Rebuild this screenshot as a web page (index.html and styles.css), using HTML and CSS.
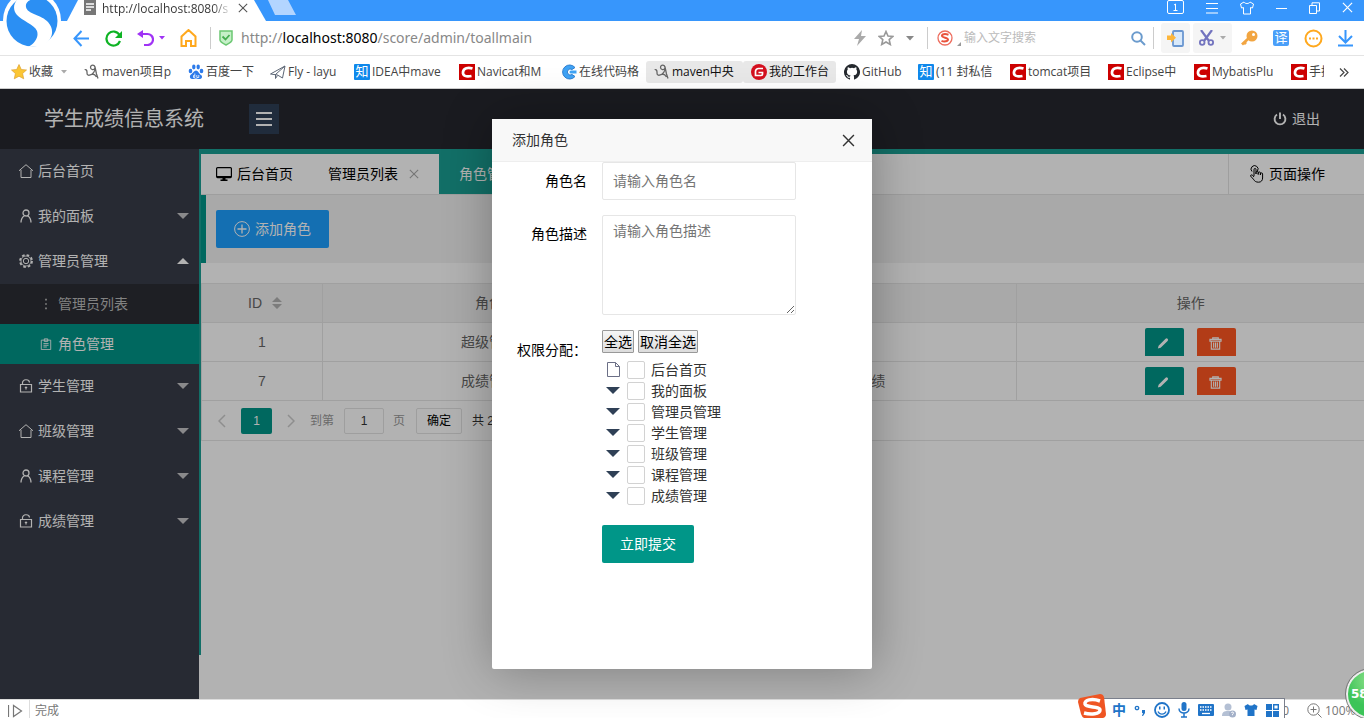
FILE: index.html
```html
<!DOCTYPE html>
<html lang="zh-CN">
<head>
<meta charset="utf-8">
<title>学生成绩信息系统</title>
<link rel="stylesheet" href="styles.css">
</head>
<body>
<svg class="defs" aria-hidden="true">
  <symbol id="i-house" viewBox="0 0 14 14"><path d="M0 6.800L7 .7l7 6.100M2 6v7.500h10V6" fill="none" stroke="currentColor"/></symbol>
  <symbol id="i-user" viewBox="0 0 14 14"><circle cx="7" cy="4" r="3" fill="none" stroke="currentColor" stroke-width="1.300"/><path d="M2 13.500C2 10 3.500 8 5.500 6.800M12 13.500C12 10 10.500 8 8.500 6.800" fill="none" stroke="currentColor" stroke-width="1.300"/></symbol>
  <symbol id="i-gear" viewBox="0 0 14 14"><circle cx="7" cy="7" r="6" fill="none" stroke="currentColor" stroke-width="1.800" stroke-dasharray="2.600 2.100"/><circle cx="7" cy="7" r="5" fill="none" stroke="currentColor" stroke-width=".8"/><circle cx="7" cy="7" r="2.700" fill="none" stroke="currentColor"/></symbol>
  <symbol id="i-lock" viewBox="0 0 14 14"><path d="M1.500 5.500h11v7.500h-11zM3.500 5.500V4a3.500 3 0 0 1 7-.5M7 7.500v3M5.800 8.500h2.400" fill="none" stroke="currentColor" stroke-width="1.200"/></symbol>
  <symbol id="i-note" viewBox="0 0 14 14"><path d="M1.500 2.500h11v11h-11zM5 1h4v3H5zM4 6.500h6M4 8.500h6M4 10.500h4" fill="none" stroke="currentColor"/></symbol>
  <symbol id="i-dots" viewBox="0 0 14 14"><path d="M6 1h2v2H6zM6 6h2v2H6zM6 11h2v2H6z" fill="currentColor"/></symbol>
  <symbol id="i-close" viewBox="0 0 12 12"><path d="M1 1l10 10M11 1L1 11" fill="none" stroke="currentColor" stroke-width="1.300"/></symbol>
  <symbol id="i-pen" viewBox="0 0 14 14"><path d="M2 12.500l.8-3 7.500-7.500a1.500 1.500 0 0 1 2.200 2.200L5 11.700z" fill="currentColor"/></symbol>
  <symbol id="i-trash" viewBox="0 0 14 14"><path d="M1 2.500h12v2H1zM4 2.500V1h6v1.500M2.500 5v8h9V5M5 6v5.500M7 6v5.500M9 6v5.500" fill="none" stroke="currentColor" stroke-width="1.200"/></symbol>
  <symbol id="i-csdn" viewBox="0 0 16 16"><path d="M0 0h16v16H0z" fill="#c00"/><path d="M13.500 4.500C9 3 4.500 4 4 8s3 5 8.500 4" fill="none" stroke="#fff" stroke-width="2.700"/></symbol>
  <symbol id="i-maven" viewBox="0 0 16 16"><path d="M.8 6C1.500 5 3 6 3 8s0 3.500 2.500 3.200C9 10.500 11.500 7 11 3.500 10.700.5 6.500.5 6.500 3.200S10 6.500 11 4M11 3l1.500 7 1.500 4.500M8 10.500c2-1 3 0 4.500 2.500" fill="none" stroke="#666" stroke-width="1.300"/></symbol>
  <symbol id="i-shirt" viewBox="0 0 14 14"><path d="M4 1L.5 3l1 4 2-.5V13h7V6.500l2 .5 1-4L10 1C9 3 5 3 4 1z"/></symbol>
</svg>

<header class="titlebar">
  <svg class="tabshape" width="200" height="21" viewBox="0 0 200 21" aria-hidden="true"><path d="M0 21L11 0h176l12 21z" fill="#fff"/></svg>
  <div class="tab">
    <svg width="12" height="15" viewBox="0 0 12 15"><path d="M0 0h12v15H0z" fill="#777"/><path d="M2 4h8M2 7h8M2 10h5" stroke="#fff" stroke-width="1.500"/></svg>
    <span class="tab-title">http://localhost:8080/s</span>
    <button class="plain" aria-label="关闭标签"><svg width="10" height="10" viewBox="0 0 12 12"><use href="#i-close"/></svg></button>
  </div>
  <svg class="ghost" width="28" height="15" viewBox="0 0 28 15" aria-hidden="true"><path d="M0 0h20l8 15H7z" fill="#b3d5ff"/></svg>
  <div class="win">
    <svg width="17" height="15" viewBox="0 0 17 15"><rect x=".5" y=".5" width="16" height="13" rx="1.500"/><path d="M7 5l1.500-1v7M6.500 10.500h4"/></svg>
    <svg width="12" height="12" viewBox="0 0 12 12"><path d="M0 1.500h12M0 6.500h12M0 11h12"/></svg>
    <svg width="14" height="14" viewBox="0 0 14 14"><use href="#i-shirt"/></svg>
    <svg width="11" height="12" viewBox="0 0 11 12"><path d="M0 6.500h11"/></svg>
    <svg width="11" height="12" viewBox="0 0 11 12"><path d="M.5 3.500h7v8h-7zM3 3V.800h7.500V9H8"/></svg>
    <svg width="11" height="11" viewBox="0 0 12 12"><use href="#i-close"/></svg>
  </div>
</header>
<svg class="logo" width="62" height="50" viewBox="0 0 62 50" aria-hidden="true">
  <circle cx="32" cy="20" r="29" fill="#fff"/>
  <circle cx="32" cy="21" r="25.500" fill="#2b8ff3"/>
  <path d="M27-6C14-2 11 8 17 15c5 6 17 9 20 16 2 6-2 12-9 16l14-1c11-6 13-16 6-24-6-7-21-8-22-15-1-5 4-8 12-9z" fill="#fff"/>
</svg>

<nav class="toolbar">
  <div class="nav">
    <svg width="17" height="17" viewBox="0 0 17 17"><path d="M16 8.500H1.500M8.500 1L1.500 8.500l7 7.500" fill="none" stroke="#3796fc" stroke-width="2"/></svg>
    <svg width="17" height="17" viewBox="0 0 17 17"><path d="M14.500 5A7 7 0 1 0 15 11" fill="none" stroke="#0eb324" stroke-width="2.200"/><path d="M17 1v7h-7z" fill="#0eb324"/></svg>
    <span class="undo"><svg width="17" height="16" viewBox="0 0 17 16"><path d="M3 4h7.500a5 5 0 0 1 0 11H7" fill="none" stroke="#a033f5" stroke-width="2.200"/><path d="M0 4l6-4v8z" fill="#a033f5"/></svg><svg width="6" height="4" viewBox="0 0 6 4"><path d="M0 0h6L3 3.500z" fill="#a033f5"/></svg></span>
    <svg width="17" height="18" viewBox="0 0 17 18"><path d="M1.500 7.500L8.500 1l7 6.500v9.500H11v-5H6v5H1.500z" fill="none" stroke="#ffa81d" stroke-width="2"/></svg>
  </div>
  <i class="vline"></i>
  <svg width="14" height="16" viewBox="0 0 14 16"><path d="M1 1h12v9c0 2-4 4-6 5-2-1-6-3-6-5z" fill="#c5f0c8" stroke="#6cc773" stroke-width="1.500"/><path d="M3.500 6.500l3 3 4-4.500" fill="none" stroke="#45ae50" stroke-width="1.800"/></svg>
  <div class="url">http://<b>localhost:8080</b>/score/admin/toallmain</div>
  <div class="urltools">
    <svg width="12" height="16" viewBox="0 0 12 16"><path d="M8 0L0 9h5l-2 7 9-10H7z" fill="#aaa"/></svg>
    <svg width="16" height="16" viewBox="0 0 16 16"><path d="M8 1.500l2 4.500 4.800.4-3.600 3.200 1.100 4.900L8 12l-4.300 2.500 1.100-4.900L1.200 6.400 6 6z" fill="none" stroke="#999" stroke-width="1.600"/></svg>
    <svg width="8" height="5" viewBox="0 0 8 5"><path d="M0 0h8L4 4.500z" fill="#888"/></svg>
  </div>
  <i class="vline"></i>
  <div class="search">
    <svg width="16" height="16" viewBox="0 0 16 16"><circle cx="8" cy="8" r="7" fill="none" stroke="#ee6d5e" stroke-width="1.300"/><path d="M11.500 4.800C8 3.500 4.800 4 5 6s6 1.500 6 3.500S7 12 4.500 10.800" fill="none" stroke="#e9533d" stroke-width="2"/></svg>
    <svg class="corner" width="4" height="4" viewBox="0 0 4 4"><path d="M4 0v4H0z" fill="#999"/></svg>
    <input type="text" aria-label="搜索" placeholder="输入文字搜索">
    <svg width="15" height="15" viewBox="0 0 15 15"><circle cx="6" cy="6" r="4.800" fill="none" stroke="#6b9bcd" stroke-width="2"/><path d="M9.500 9.500l4.500 4.500" stroke="#6b9bcd" stroke-width="2"/></svg>
  </div>
  <i class="vline"></i>
  <div class="ext">
    <span class="pill"><svg width="17" height="17" viewBox="0 0 17 17"><rect x="6" y="1" width="10" height="15" rx="1" fill="#d9e9fa" stroke="#6a97d1" stroke-width="1.800"/><path d="M0 5.500h4V3l5 4.800-5 4.700V10H0z" fill="#fdb63b"/></svg></span>
    <span class="pill"><svg width="15" height="16" viewBox="0 0 15 16"><path d="M2 0l8 11M13 0L5 11" stroke="#7374bf" stroke-width="2.200"/><circle cx="3.200" cy="12.500" r="2.300" fill="none" stroke="#7374bf" stroke-width="1.800"/><circle cx="11.800" cy="12.500" r="2.300" fill="none" stroke="#7374bf" stroke-width="1.800"/></svg><svg width="6" height="4" viewBox="0 0 6 4"><path d="M0 0h6L3 3.500z" fill="#aaa"/></svg></span>
    <span class="row">
      <svg width="17" height="16" viewBox="0 0 17 16"><circle cx="11" cy="6" r="5.500" fill="#f2a541"/><path d="M8 8l-7 6.500M3 12l2 2" stroke="#f2a541" stroke-width="2.800"/><circle cx="12.500" cy="4.500" r="1.500" fill="#fff"/></svg>
      <span class="yi">译</span>
      <svg width="19" height="19" viewBox="0 0 19 19"><circle cx="9.500" cy="9.500" r="8" fill="none" stroke="#ffa81d" stroke-width="2"/><path d="M5 8.500h2v2H5zM8.500 8.500h2v2h-2zM12 8.500h2v2h-2z" fill="#ffa81d"/></svg>
      <svg width="15" height="17" viewBox="0 0 15 17"><path d="M7.500 0v12M1 6l6.500 6.500L14 6M0 15.500h15" fill="none" stroke="#3796fc" stroke-width="2"/></svg>
    </span>
  </div>
</nav>

<nav class="bookmarks">
  <a href="#"><svg width="16" height="16" viewBox="0 0 16 16"><path d="M8 .500l2.300 5 5.200.5-3.900 3.500 1.100 5.300L8 12.200l-4.700 2.600 1.100-5.300L.500 6l5.200-.5z" fill="#fbc634" stroke="#dda032" stroke-width=".7"/></svg><span>收藏</span><svg class="drop" width="6" height="4" viewBox="0 0 6 4"><path d="M0 0h6L3 3.500z" fill="#aaa"/></svg></a>
  <a href="#"><svg width="16" height="16"><use href="#i-maven"/></svg><span>maven项目p</span></a>
  <a href="#"><svg width="16" height="16" viewBox="0 0 16 16"><g fill="#2d7bea"><ellipse cx="2.500" cy="7" rx="1.800" ry="2.200"/><ellipse cx="5.800" cy="3" rx="1.700" ry="2.400"/><ellipse cx="10.200" cy="3" rx="1.700" ry="2.400"/><ellipse cx="13.500" cy="7" rx="1.800" ry="2.200"/><path d="M8 6.500c2 0 3 3 5 4.500s1 4-1.500 4S9 14.500 8 14.500s-2 .5-4 .5-3-3-1-4.500S6 6.500 8 6.500z"/></g><path d="M6.800 9.500v4H5.500v-2h1M8.800 11v2.500h2V11" fill="none" stroke="#fff" stroke-width=".8"/></svg><span>百度一下</span></a>
  <a href="#"><svg width="16" height="16" viewBox="0 0 16 16"><path d="M.5 10L15 2l-2.500 12-5-3zM15 2L5.500 10.500v4l2-3" fill="none" stroke="#5c6675"/></svg><span>Fly - layu</span></a>
  <a href="#"><i class="zhi">知</i><span>IDEA中mave</span></a>
  <a href="#"><svg width="16" height="16"><use href="#i-csdn"/></svg><span>Navicat和M</span></a>
  <a href="#"><svg width="16" height="16" viewBox="0 0 16 16"><path d="M14 3.500A7 7 0 1 0 14 12.500L11 10.500A3 3 0 1 1 11 5.500z" fill="#3fa3f5" stroke="#2f7fd0"/><path d="M15.500 6.500H10a1.500 1.500 0 0 0 0 3h5.500z" fill="#3fa3f5"/></svg><span>在线代码格</span></a>
  <a href="#" class="on"><svg width="16" height="16"><use href="#i-maven"/></svg><span>maven中央</span></a>
  <a href="#" class="on"><svg width="16" height="16" viewBox="0 0 16 16"><circle cx="8" cy="8" r="8" fill="#d4101f"/><path d="M12 4.500H7.500a3 3 0 0 0-3 3v4H10a1.500 1.500 0 0 0 1.500-1.500V8.500H7.500" fill="none" stroke="#fff" stroke-width="1.700"/></svg><span>我的工作台</span></a>
  <a href="#"><svg width="16" height="16" viewBox="0 0 16 16"><path fill="#24292e" d="M8 0a8 8 0 0 0-2.530 15.590c.4.070.55-.17.550-.38v-1.490c-2.010.37-2.530-.49-2.690-.94-.09-.23-.48-.94-.82-1.130-.28-.15-.68-.52-.01-.53.630-.01 1.080.580 1.230.820.720 1.210 1.870.870 2.330.660.070-.52.280-.87.510-1.070-1.780-.2-3.640-.89-3.640-3.950 0-.87.310-1.590.820-2.150-.08-.2-.36-1.020.080-2.120 0 0 .670-.21 2.200.820a7.400 7.400 0 0 1 4 0c1.530-1.040 2.200-.82 2.200-.82.440 1.100.160 1.920.080 2.120.510.560.820 1.270.820 2.150 0 3.070-1.870 3.750-3.650 3.950.290.250.540.730.540 1.480v2.190c0 .210.150.460.550.380A8 8 0 0 0 8 0z"/></svg><span>GitHub</span></a>
  <a href="#"><i class="zhi">知</i><span>(11 封私信</span></a>
  <a href="#"><svg width="16" height="16"><use href="#i-csdn"/></svg><span>tomcat项目</span></a>
  <a href="#"><svg width="16" height="16"><use href="#i-csdn"/></svg><span>Eclipse中</span></a>
  <a href="#"><svg width="16" height="16"><use href="#i-csdn"/></svg><span>MybatisPlu</span></a>
  <a href="#"><svg width="16" height="16"><use href="#i-csdn"/></svg><span>手把</span></a>
  <button class="plain more" aria-label="更多书签"><svg width="10" height="9" viewBox="0 0 10 9"><path d="M1 .500l4 4-4 4M5 .500l4 4-4 4" fill="none" stroke="#444" stroke-width="1.200"/></svg></button>
</nav>

<div class="app">
  <header class="head">
    <h1>学生成绩信息系统</h1>
    <button class="fold" aria-label="折叠菜单"><svg width="18" height="16" viewBox="0 0 18 16"><path d="M1 2h16M1 8h16M1 14h16" stroke="#fff" stroke-width="2"/></svg></button>
    <a href="#" class="logout"><svg width="14" height="14" viewBox="0 0 14 14"><path d="M4 2.500a5.400 5.400 0 1 0 6 0M7 .500V7" fill="none" stroke="currentColor" stroke-width="1.900"/></svg>退出</a>
  </header>
  <div class="cols">
    <nav class="side">
      <a href="#"><svg width="14" height="14"><use href="#i-house"/></svg>后台首页</a>
      <a href="#"><svg width="14" height="14"><use href="#i-user"/></svg>我的面板<i class="caret"></i></a>
      <a href="#"><svg width="14" height="14"><use href="#i-gear"/></svg>管理员管理<i class="caret up"></i></a>
      <a href="#" class="sub"><svg width="12" height="12"><use href="#i-dots"/></svg>管理员列表</a>
      <a href="#" class="sub active"><svg width="12" height="12"><use href="#i-note"/></svg>角色管理</a>
      <a href="#"><svg width="14" height="14"><use href="#i-lock"/></svg>学生管理<i class="caret"></i></a>
      <a href="#"><svg width="14" height="14"><use href="#i-house"/></svg>班级管理<i class="caret"></i></a>
      <a href="#"><svg width="14" height="14"><use href="#i-user"/></svg>课程管理<i class="caret"></i></a>
      <a href="#"><svg width="14" height="14"><use href="#i-lock"/></svg>成绩管理<i class="caret"></i></a>
    </nav>
    <main class="main">
      <div class="tabs">
        <a href="#"><svg width="16" height="16" viewBox="0 0 16 16"><rect x=".6" y="1.600" width="14.800" height="10" rx="1" fill="none" stroke="currentColor" stroke-width="1.200"/><path d="M1 10h14v2H1zM6.500 12h3v1.500h2V15h-7v-1.500h2z" fill="currentColor"/></svg>后台首页</a>
        <a href="#">管理员列表<svg class="x" width="10" height="10"><use href="#i-close"/></svg></a>
        <a href="#" class="cur">角色管理<svg class="x" width="10" height="10"><use href="#i-close"/></svg></a>
        <a href="#" class="ops"><svg width="15" height="18" viewBox="0 0 15 18"><path d="M3 6.500A3.500 3.500 0 1 1 8.500 6M5 11V4.500a1 1 0 0 1 2 0V9V7.500a1 1 0 0 1 2.200 0V9.500V8a1 1 0 0 1 2.200 0V10V9a1 1 0 0 1 2.200 0v4c0 2.500-1.500 4.200-4 4.200-2.700 0-4-1-5.200-3L1.500 11c0-1.200 1.500-1.500 2.300-.5L5 12" fill="none" stroke="currentColor"/></svg>页面操作</a>
      </div>
      <div class="quote">
        <button class="add"><svg width="16" height="16" viewBox="0 0 16 16"><circle cx="8" cy="8" r="7.400" fill="none" stroke="currentColor"/><path d="M8 3.500v9M3.500 8h9" stroke="currentColor" stroke-width="1.300"/></svg>添加角色</button>
      </div>
      <table class="grid">
        <colgroup><col class="c-id"><col><col><col></colgroup>
        <thead><tr><th><span class="sorted">ID<svg width="10" height="12" viewBox="0 0 10 12"><path d="M5 0l5 5H0zM0 7h10l-5 5z" fill="#b2b2b2"/></svg></span></th><th>角色名</th><th>角色描述</th><th>操作</th></tr></thead>
        <tbody>
          <tr><td>1</td><td>超级管理员</td><td></td><td><div class="acts"><button aria-label="编辑"><svg width="13" height="13"><use href="#i-pen"/></svg></button><button class="del" aria-label="删除"><svg width="13" height="13"><use href="#i-trash"/></svg></button></div></td></tr>
          <tr><td>7</td><td>成绩管理员</td><td>管理学生成绩</td><td><div class="acts"><button aria-label="编辑"><svg width="13" height="13"><use href="#i-pen"/></svg></button><button class="del" aria-label="删除"><svg width="13" height="13"><use href="#i-trash"/></svg></button></div></td></tr>
        </tbody>
      </table>
      <div class="pager">
        <svg width="8" height="14" viewBox="0 0 8 14"><path d="M7 1L1 7l6 6" fill="none" stroke="#ccc" stroke-width="1.500"/></svg>
        <b>1</b>
        <svg width="8" height="14" viewBox="0 0 8 14"><path d="M1 1l6 6-6 6" fill="none" stroke="#ccc" stroke-width="1.500"/></svg>
        <label for="page">到第</label><input id="page" type="text" value="1"><span>页</span><button>确定</button><em>共 2 条</em>
      </div>
    </main>
  </div>

  <div class="shade">
    <section class="dialog" role="dialog" aria-labelledby="dlg">
      <header><h2 id="dlg">添加角色</h2><button class="plain" aria-label="关闭"><svg width="13" height="13" viewBox="0 0 12 12"><use href="#i-close"/></svg></button></header>
      <form>
        <label class="lab" for="rname">角色名</label>
        <input class="field" id="rname" type="text" placeholder="请输入角色名">
        <label class="lab" for="rdesc">角色描述</label>
        <textarea class="field" id="rdesc" placeholder="请输入角色描述"></textarea>
        <span class="lab">权限分配<span class="colon">：</span></span>
        <div>
          <div class="pick"><button type="button">全选</button><button type="button">取消全选</button></div>
          <ul class="tree">
            <li><svg width="13" height="15" viewBox="0 0 13 15"><path d="M.5.5h8l4 4v10H.5zM8.500.5v4h4" fill="none" stroke="#6b6f86"/></svg><label><input type="checkbox">后台首页</label></li>
            <li><i></i><label><input type="checkbox">我的面板</label></li>
            <li><i></i><label><input type="checkbox">管理员管理</label></li>
            <li><i></i><label><input type="checkbox">学生管理</label></li>
            <li><i></i><label><input type="checkbox">班级管理</label></li>
            <li><i></i><label><input type="checkbox">课程管理</label></li>
            <li><i></i><label><input type="checkbox">成绩管理</label></li>
          </ul>
          <button type="button" class="submit">立即提交</button>
        </div>
      </form>
    </section>
  </div>
</div>

<footer class="status">
  <svg width="15" height="14" viewBox="0 0 15 14"><path d="M.5 1v12M5.500 1.500v11l8-5.500z" fill="none" stroke="#777" stroke-width="1.200"/></svg>
  <i class="vline"></i>
  <span>完成</span>
  <span class="zoom">0</span>
  <svg width="15" height="15" viewBox="0 0 15 15"><path d="M6.500 3.500v6M3.500 6.500h6M10.500 10.500l4 4" stroke="#777"/><circle cx="6.500" cy="6.500" r="5.700" fill="none" stroke="#777"/></svg>
  <span class="pct">100%</span>
</footer>
<div class="ime">
  <b>中</b>
  <svg width="12" height="14" viewBox="0 0 12 14"><circle cx="3" cy="5" r="1.700" fill="none" stroke="#2074c8" stroke-width="1.300"/><path d="M8 7h3v3l-2 3H8l1-3H8z"/></svg>
  <svg width="16" height="16" viewBox="0 0 16 16"><circle cx="8" cy="8" r="7" fill="none" stroke="#2074c8" stroke-width="1.800"/><path d="M5 4.500h1.500v3H5zM9.500 4.500H11v3H9.500z"/><path d="M4 9.500c1.500 3.500 6.500 3.500 8 0" fill="none" stroke="#2074c8" stroke-width="1.300"/></svg>
  <svg width="12" height="16" viewBox="0 0 12 16"><rect x="3.500" width="5" height="9" rx="2.500"/><path d="M1 6.500c0 6 10 6 10 0M6 11v4M3 15h6" fill="none" stroke="#2074c8" stroke-width="1.500"/></svg>
  <svg width="16" height="12" viewBox="0 0 16 12"><rect width="16" height="12" rx="1"/><path d="M2 3h12M2 6h12" stroke="#fff" stroke-width="1.500" stroke-dasharray="1.500 1"/><path d="M4 9.500h8" stroke="#fff" stroke-width="1.300"/></svg>
  <svg width="14" height="15" viewBox="0 0 14 15"><circle cx="6" cy="4" r="3.500" fill="#b4c0d4"/><path d="M0 13c0-4 2-5 6-5s6 1 6 5z" fill="#b4c0d4"/><circle cx="10.500" cy="11" r="3.500" fill="#a3b0c8"/><path d="M9.500 10c0-1.500 2.500-1 2 .3l-1 .9v1" fill="none" stroke="#fff"/></svg>
  <svg width="14" height="14" viewBox="0 0 14 14"><use href="#i-shirt"/></svg>
  <svg width="13" height="13" viewBox="0 0 13 13"><path d="M0 0h6v6H0zM0 7h6v6H0zM7 7h6v6H7z"/><path d="M7.700.7h4.600v4.600H7.700z" fill="none" stroke="#2074c8" stroke-width="1.400"/></svg>
</div>
<svg class="sogou" width="28" height="24" viewBox="0 0 28 24" aria-hidden="true"><path d="M2 4L22 0q3 0 4 3l2 17q0 3-3 4H6q-2-1-3-4L0 8q0-3 2-4z" fill="#ef5523"/><path d="M22 7C14 4 6 6 7 10s15 2 15 6-9 5-16 3" fill="none" stroke="#fff" stroke-width="3.500"/></svg>
<div class="ball">58</div>
</body>
</html>
```

FILE: styles.css
```css
* { box-sizing: border-box; }
html, body { height: 100%; }
body {
  margin: 0;
  position: relative;
  display: flex;
  flex-direction: column;
  overflow: hidden;
  font: 14px/20px "Liberation Sans", "Noto Sans CJK SC", sans-serif;
  color: #333;
  background: #fff;
}
button, input, textarea { font: inherit; color: inherit; }
a { color: inherit; text-decoration: none; }
svg { flex: none; display: block; }
i, em { font-style: normal; }
h1, h2, ul { margin: 0; padding: 0; font-weight: 400; list-style: none; }
.defs { position: absolute; width: 0; height: 0; }
.plain { border: 0; padding: 0; background: none; }

/* browser chrome */
.titlebar {
  flex: none;
  height: 21px;
  display: flex;
  background: #3796fc;
  position: relative;
  overflow: hidden;
  padding-left: 84px;
}
.tabshape { position: absolute; left: 67px; top: 0; }
.tab { position: relative; display: flex; align-items: flex-start; width: 184px; }
.tab-title {
  flex: none;
  width: 130px;
  margin: 0 6px;
  white-space: nowrap;
  font: 12px/18px "Open Sans", sans-serif;
  color: transparent;
  background: linear-gradient(90deg, #333 85%, #fff);
  background-clip: text;
  -webkit-background-clip: text;
}
.tab .plain { margin-top: 3px; color: #555; }
.win { margin-left: auto; padding-right: 11px; display: flex; gap: 22px; height: 15px; align-items: center; color: #fff; }
.win svg { fill: none; stroke: #fff; }
.logo { position: absolute; left: 0; top: 0; z-index: 2; }
.toolbar {
  flex: none;
  height: 35px;
  display: flex;
  align-items: center;
  padding: 0 11px 0 73px;
  border-bottom: 1px solid #e4e4e4;
}
.vline { flex: none; width: 1px; height: 22px; background: #ccc; }
.nav { display: flex; align-items: center; gap: 15px; margin-right: 13px; }
.undo { display: flex; align-items: center; gap: 5px; }
.toolbar > svg { margin: 0 8px; }
.url { flex: 1; font: 14px/20px "Noto Sans", sans-serif; color: #888; }
.url b { font-weight: 400; color: #000; }
.urltools { display: flex; align-items: center; gap: 12px; margin-right: 13px; }
.search { display: flex; align-items: center; width: 225px; padding: 0 7px 0 9px; }
.search .corner { margin: 12px 3px 0 4px; }
.search input { flex: 1; min-width: 0; border: 0; padding: 0; font-size: 12px; }
.search input::placeholder { color: #bbb; }
.ext { display: flex; align-items: center; gap: 3px; padding-left: 7px; }
.pill { display: flex; align-items: center; gap: 6px; height: 30px; padding: 0 6px; border-radius: 3px; background: #f5f5f5; }
.row { display: flex; align-items: center; gap: 15px; padding-left: 6px; }
.yi { width: 16px; height: 16px; border-radius: 2px; background: #4a9ff9; color: #fff; font-size: 13px; line-height: 15px; text-align: center; }
.bookmarks {
  flex: none;
  height: 33px;
  display: grid;
  grid-template-columns: 73px 104px 82px 84px 105px 102px 93px 97px 93px 74px 92px 98px 86px 97px 41px 1fr;
  align-items: center;
  border-bottom: 1px solid #ccc;
  padding-left: 3px;
  font: 12px/22px "Open Sans", "Noto Sans CJK SC", sans-serif;
  color: #444;
}
.bookmarks a { display: flex; align-items: center; gap: 2px; padding-left: 8px; height: 22px; overflow: hidden; white-space: nowrap; }
.bookmarks .on { background: #e8e8e8; border-radius: 3px; color: #111; }
.bookmarks .drop { margin-left: 6px; }
.more { justify-self: center; }
.zhi { width: 16px; height: 16px; border-radius: 1px; background: #0f88eb; color: #fff; font-size: 13px; line-height: 15px; text-align: center; }

/* application */
.app { flex: 1; min-height: 0; position: relative; display: flex; flex-direction: column; }
.head { flex: none; height: 60px; display: flex; align-items: center; padding: 0 44px; background: #26282f; color: #fff; }
.head h1 { font-size: 20px; line-height: 30px; margin-right: 45px; }
.fold { width: 30px; height: 30px; border: 0; padding: 0 6px; background: #2f4056; }
.logout { margin-left: auto; display: flex; align-items: center; gap: 5px; }
.cols { flex: 1; min-height: 0; display: flex; }
.side { flex: none; width: 199px; background: #393d49; color: #fff; }
.side a { display: flex; align-items: center; height: 45px; padding: 0 10px 2px 19px; gap: 5px; }
.side .sub { height: 40px; padding: 0 10px 0 40px; gap: 6px; background: #2b2d34; color: #bbb; }
.side .active { background: #009688; color: #fff; }
.caret { margin-left: auto; border: 6px solid transparent; border-top-color: #c4c4c8; border-bottom: 0; }
.caret.up { border-top: 0; border-bottom: 6px solid #fff; }
.main { flex: 1; min-width: 0; margin-bottom: 44px; border-left: 2px solid #1aa094; border-top: 5px solid #1aa094; }
.tabs { display: flex; height: 41px; border-bottom: 1px solid #e2e2e2; color: #000; }
.tabs a { display: flex; align-items: center; gap: 5px; padding: 0 15px; }
.tabs a + a { padding: 0 20px; }
.tabs .x { color: #aaa; margin-left: 6px; }
.tabs .cur { background: #1aa094; color: #fff; }
.tabs .ops { width: 136px; margin-left: auto; border-left: 1px solid #e2e2e2; }
.quote { padding: 15px 10px; border-left: 5px solid #009688; background: #f2f2f2; margin-bottom: 20px; }
.add { display: flex; align-items: center; gap: 5px; height: 38px; padding: 0 18px; border: 0; border-radius: 2px; background: #1e9fff; color: #fff; }
.grid { width: 100%; table-layout: fixed; border-collapse: collapse; color: #666; }
.c-id { width: 121px; }
.grid th, .grid td { height: 39px; padding: 0; border: 1px solid #e6e6e6; border-right-width: 0; font-weight: 400; text-align: center; line-height: 28px; }
.grid th { background: #f2f2f2; }
.sorted { display: flex; align-items: center; justify-content: center; gap: 10px; padding-left: 6px; }
.acts { display: flex; justify-content: center; gap: 13px; }
.acts button { display: flex; align-items: center; justify-content: center; width: 39px; height: 28px; border: 0; padding: 2px 4px 0 0; border-radius: 2px 2px 0 0; background: #009688; color: #fff; }
.acts .del { padding-right: 2px; background: #ff5722; }
.pager { display: flex; align-items: center; height: 40px; padding-left: 16px; border: 1px solid #e6e6e6; border-width: 0 0 1px 1px; font-size: 12px; color: #999; }
.pager b { width: 31px; margin: 0 15px; border-radius: 2px; background: #009688; color: #fff; font-weight: 400; line-height: 26px; text-align: center; }
.pager label { margin: 0 10px 0 15px; }
.pager input { width: 40px; height: 26px; border: 1px solid #e2e2e2; border-radius: 2px; background: none; text-align: center; color: #333; margin-right: 9px; }
.pager button { height: 26px; width: 46px; margin: 0 10px 0 11px; padding: 0; border: 1px solid #e2e2e2; border-radius: 2px; background: #fff; color: #000; }
.pager em { color: #333; }

/* dialog */
.shade { position: absolute; inset: 0; display: flex; align-items: center; justify-content: center; background: rgba(0, 0, 0, .3); }
.dialog { width: 380px; height: 550px; border-radius: 2px; background: #fff; box-shadow: 1px 1px 50px rgba(0, 0, 0, .3); }
.dialog header { display: flex; align-items: center; justify-content: space-between; height: 43px; padding: 0 17px 0 20px; border-bottom: 1px solid #eee; background: #f8f8f8; }
.dialog h2 { font-size: 14px; line-height: 20px; }
.dialog form { display: grid; grid-template-columns: 95px 194px; column-gap: 15px; row-gap: 15px; align-items: start; }
.lab { padding-top: 9px; text-align: right; color: #000; white-space: nowrap; }
.colon { font-family: "Noto Sans CJK TC", sans-serif; }
.field { width: 194px; height: 38px; padding: 0 10px; border: 1px solid #e6e6e6; border-radius: 2px; background: #fff; }
textarea.field { height: 100px; padding: 5px 10px; resize: vertical; display: block; }
.field::placeholder { color: #757575; }
.pick { display: flex; gap: 4px; margin-bottom: 6px; }
.pick button { height: 23px; padding: 0 1px; border: 1px solid #999; border-radius: 1px; background: linear-gradient(#f6f6f6, #dcdcdc); color: #000; line-height: 20px; }
.tree li { display: flex; align-items: center; height: 21px; padding-left: 4px; }
.tree li > svg { margin: 0 7px 0 1px; }
.tree i { margin-right: 7px; border: 7px solid transparent; border-top-color: #2f4056; border-bottom: 0; }
.tree label { display: flex; align-items: center; gap: 6px; }
.tree input { appearance: none; width: 18px; height: 18px; margin: 0; border: 1px solid #d2d2d2; border-radius: 2px; background: #fff; }
.submit { display: block; height: 38px; margin-top: 19px; padding: 0 18px; border: 0; border-radius: 2px; background: #009688; color: #fff; }

/* status bar */
.status { flex: none; height: 19px; display: flex; align-items: center; padding: 3px 0 0 8px; border-top: 1px solid #ddd; overflow: hidden; font: 12px/16px "Open Sans", "Noto Sans CJK SC", sans-serif; color: #777; }
.status .vline { margin: 0 5px 0 6px; background: #ddd; }
.zoom { margin-left: auto; margin-right: 18px; }
.pct { width: 39px; margin-left: 3px; }
.ime { position: absolute; right: 79px; bottom: 0; display: flex; align-items: center; justify-content: space-between; width: 184px; height: 20px; padding: 3px 5px 0 11px; border: 1px solid #7a7f8c; border-width: 1px 1px 0 0; background: #fff; }
.ime svg { fill: #2074c8; }
.ime b { color: #2074c8; font-size: 14px; line-height: 16px; }
.sogou { position: absolute; right: 258px; bottom: 0; }
.ball { position: absolute; right: -32px; bottom: -1px; width: 50px; height: 50px; padding-left: 3px; border: 2px solid #eee; outline: 1px solid #777; border-radius: 50%; background: radial-gradient(circle at 50% 20%, #8fe08b, #3cc458 60%); color: #fff; font: bold 12px/46px "DejaVu Sans", sans-serif; }
```
